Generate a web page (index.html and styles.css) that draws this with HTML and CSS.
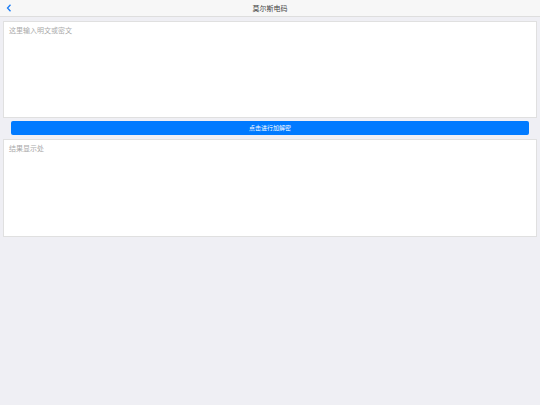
FILE: index.html
```html
<!DOCTYPE html>
<html lang="zh">
<head>
<meta charset="utf-8">
<title>莫尔斯电码</title>
<link rel="stylesheet" href="styles.css">
</head>
<body>
<header class="nav">
  <span class="back"><svg width="6" height="8" viewBox="0 0 6 8"><path d="M4.5 0.8 L1.5 4 L4.5 7.2" fill="none" stroke="#1a7cf5" stroke-width="1.3"/></svg></span>
  <span class="title">莫尔斯电码</span>
</header>
<main class="content">
  <textarea class="box input" placeholder="这里输入明文或密文"></textarea>
  <button class="action">点击进行加解密</button>
  <div class="box result">结果显示处</div>
</main>
</body>
</html>
```
FILE: styles.css
```css
* { box-sizing: border-box; }
html, body { margin: 0; padding: 0; }
body {
  width: 540px;
  height: 405px;
  background: #efeff4;
  font-family: "Noto Sans CJK SC", "Noto Sans", sans-serif;
  overflow: hidden;
}
.nav {
  position: relative;
  height: 17px;
  background: #f7f7f7;
  border-bottom: 1px solid #dedede;
  display: flex;
  align-items: center;
  justify-content: center;
}
.back {
  position: absolute;
  left: 6px;
  top: 4px;
  display: flex;
}
.title {
  font-size: 7px;
  color: #444;
}
.content {
  padding: 4px 3px;
  display: flex;
  flex-direction: column;
}
.box {
  display: block;
  width: 100%;
  background: #fff;
  border: 1px solid #e0e0e0;
  font-family: inherit;
  font-size: 7px;
  color: #999;
  padding: 3px 5px;
  margin: 0;
  line-height: 10px;
}
.input {
  height: 97px;
  resize: none;
  outline: none;
  border-radius: 0;
}
.input::placeholder { color: #aaa; }
.result {
  height: 98px;
  color: #aaa;
}
.action {
  margin: 3px 8px 4px 8px;
  height: 14px;
  border: none;
  border-radius: 2px;
  background: #007aff;
  color: #fff;
  font-family: inherit;
  font-size: 6px;
  padding: 0;
  line-height: 14px;
}
```
